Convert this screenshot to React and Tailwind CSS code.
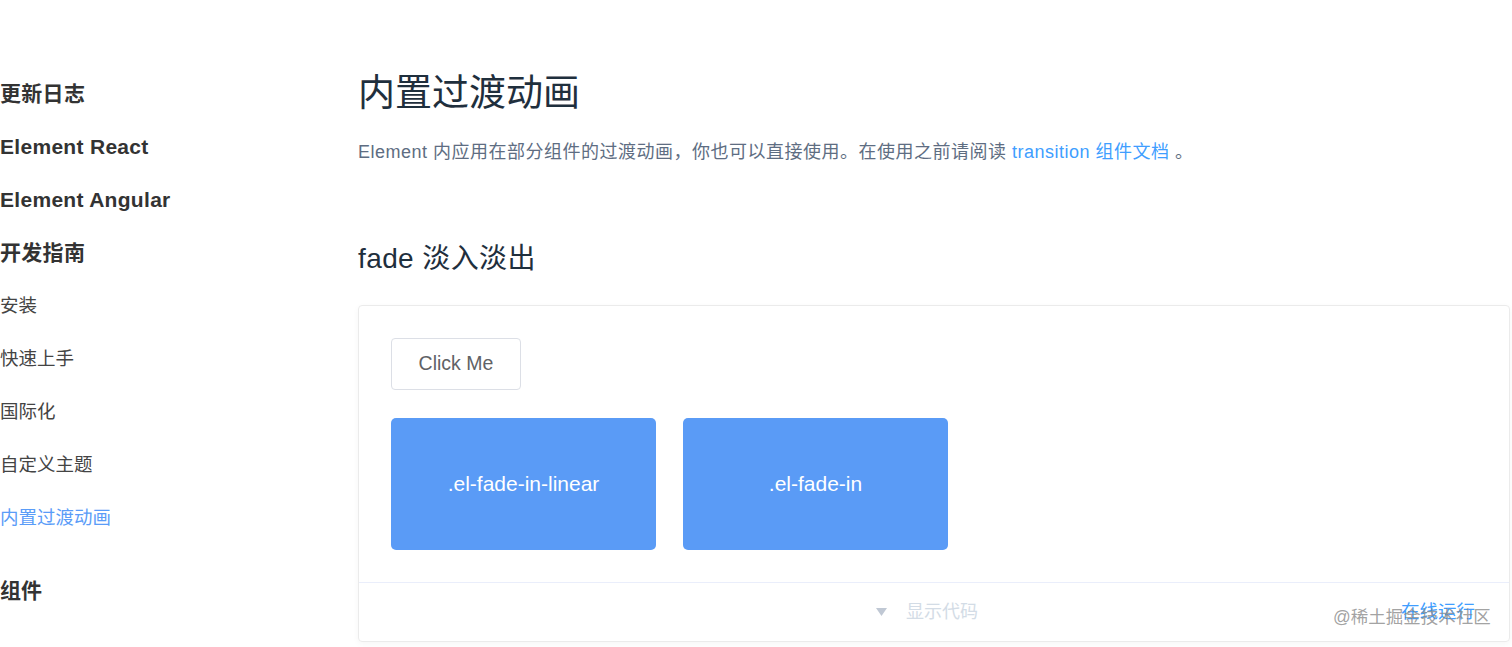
const NAV = [
  { label: "更新日志", bold: true },
  { label: "Element React", bold: true },
  { label: "Element Angular", bold: true },
  { label: "开发指南", bold: true },
  { label: "安装" },
  { label: "快速上手" },
  { label: "国际化" },
  { label: "自定义主题" },
  { label: "内置过渡动画", active: true },
];

const FONT = {
  fontFamily:
    '"Liberation Sans", "Noto Sans CJK SC", sans-serif',
};

export default function App() {
  return (
    <div className="relative flex w-[1512px] h-[647px] overflow-hidden bg-white" style={FONT}>
      {/* Sidebar */}
      <aside className="w-[358px] shrink-0 pt-[67px]">
        <ul className="flex flex-col">
          {NAV.map((item) => (
            <li
              key={item.label}
              className={
                "h-[53px] flex items-center " +
                (item.bold
                  ? "text-[21px] font-bold text-[#333] tracking-[0.3px]"
                  : item.active
                  ? "text-[18.5px] text-[#5a9cf8]"
                  : "text-[18.5px] text-[#444]")
              }
            >
              {item.label}
            </li>
          ))}
          <li className="mt-[20px] h-[53px] flex items-center text-[21px] font-bold text-[#333]">
            组件
          </li>
        </ul>
      </aside>

      {/* Main */}
      <main className="flex-1 pr-[2px]">
        <h1 className="mt-[72px] text-[37px] leading-[44px] text-[#1f2f3d] font-normal">
          内置过渡动画
        </h1>
        <p className="mt-[21px] text-[18px] leading-[30px] text-[#5e6d82] tracking-[0.5px]">
          Element 内应用在部分组件的过渡动画，你也可以直接使用。在使用之前请阅读{" "}
          <span className="text-[#409eff]">transition 组件文档</span> 。
        </p>
        <h2 className="mt-[72px] text-[28px] leading-[40px] text-[#1f2f3d] font-normal tracking-[0.4px]">
          fade 淡入淡出
        </h2>

        <div className="mt-[26px] border border-[#ebebeb] rounded-[4px] shadow-[0_2px_6px_rgba(0,0,0,0.04)]">
          <div className="p-[32px]">
            <button className="w-[130px] h-[52px] border border-[#dcdfe6] rounded-[4px] text-[19.5px] text-[#606266] bg-white">
              Click Me
            </button>
            <div className="mt-[28px] flex gap-[27px]">
              <div className="w-[265px] h-[132px] rounded-[5px] bg-[#5a9bf6] flex items-center justify-center text-white text-[21px]">
                .el-fade-in-linear
              </div>
              <div className="w-[265px] h-[132px] rounded-[5px] bg-[#5a9bf6] flex items-center justify-center text-white text-[21px]">
                .el-fade-in
              </div>
            </div>
          </div>
          <div className="relative h-[59px] border-t border-[#eaeefb] flex items-center justify-center">
            <div className="flex items-center gap-[19px] text-[18px] text-[#d3dce6] -ml-[14px]">
              <svg width="11" height="8" viewBox="0 0 11 8">
                <path d="M0 0 L11 0 L5.5 8 Z" fill="#c0c8d4" />
              </svg>
              <span>显示代码</span>
            </div>
            <span className="absolute right-[34px] top-1/2 -translate-y-1/2 text-[18.5px] text-[#409eff]">
              在线运行
            </span>
          </div>
        </div>
      </main>

      {/* Watermark */}
      <div className="absolute left-[1333px] top-[605px] text-[17.5px] leading-[24px] text-[#8a8a8a]/80">
        @稀土掘金技术社区
      </div>
    </div>
  );
}
